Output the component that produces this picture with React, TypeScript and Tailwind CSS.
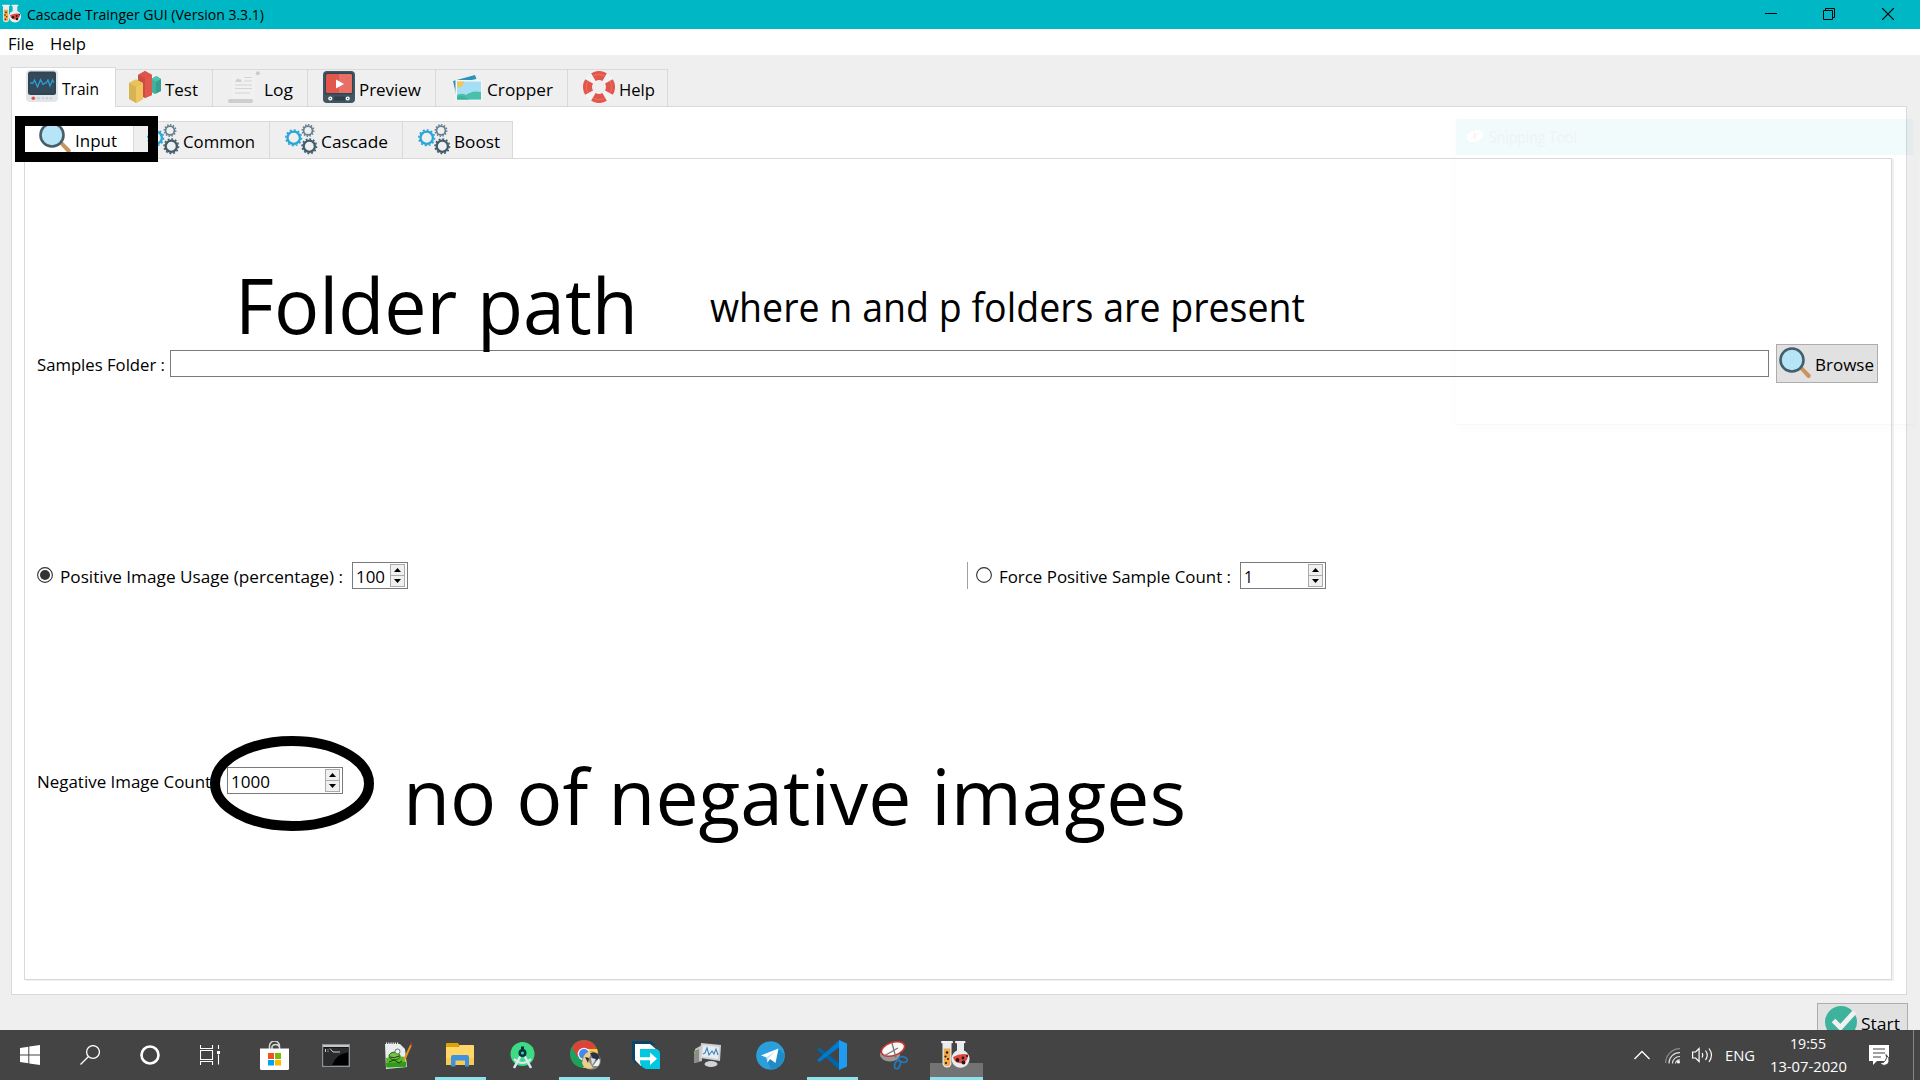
import React, { useLayoutEffect, useRef } from "react";

/** Single line of text condensed or widened to fill the width of its box. */
function Fit({ className, children }: { className: string; children: string }) {
  const box = useRef<HTMLSpanElement>(null);
  const text = useRef<HTMLSpanElement>(null);
  useLayoutEffect(() => {
    if (box.current && text.current) {
      const ratio = box.current.clientWidth / text.current.getBoundingClientRect().width;
      text.current.style.transform = `scaleX(${ratio})`;
    }
  }, []);
  return (
    <span className={`block shrink-0 whitespace-nowrap ${className}`}>
      <span ref={box} className="block w-full">
        <span ref={text} className="inline-block origin-left align-top">
          {children}
        </span>
      </span>
    </span>
  );
}

const Magnifier = ({ className = "" }: { className?: string }) => (
  <svg className={`size-8 shrink-0 ${className}`} viewBox="0 0 32 32">
    <path d="M20.5 22l3-2.5 8 8.3c1 1.500-1 4-3 3z" fill="#c9955c" />
    <circle cx="13" cy="13" r="11.500" fill="#b5e5f6" stroke="#465d6c" strokeWidth="2.600" />
  </svg>
);

const Gear = ({ x, y, r, c, w }: { x: number; y: number; r: number; c: string; w: number }) => (
  <g fill="none" stroke={c}>
    <circle cx={x} cy={y} r={r} strokeWidth={w} />
    <circle cx={x} cy={y} r={r + w / 2 + 0.5} strokeWidth="1.500" pathLength="48" strokeDasharray="2 2" />
  </g>
);

const Gears = () => (
  <svg className="size-8 shrink-0 overflow-visible" viewBox="0 0 32 32">
    <Gear x={8.7} y={14.8} r={6.2} c="#27a7d8" w={2.3} />
    <Gear x={23} y={7.5} r={4.4} c="#667f8f" w={1.7} />
    <Gear x={24.3} y={23.2} r={5.6} c="#415b6b" w={2.3} />
  </svg>
);

const TrainIcon = () => (
  <svg className="size-8 shrink-0" viewBox="0 0 32 32">
    <rect width="32" height="32" rx="4" fill="#e3e6e8" />
    <rect x="2" y="1.500" width="28" height="23.500" rx="2.500" fill="#2f4554" />
    <rect x="4" y="3.500" width="24" height="19.500" fill="#34495a" />
    <path d="M4 13h3l1.500-3 3 7 3-7.500 2.500 5 2-1.500h1l2-3 2 6 2.500-6 1.500 2.500" fill="none" stroke="#2a9fd0" strokeWidth="1.300" />
    <circle cx="7.300" cy="28.300" r="1.800" fill="#e0524a" />
    <g fill="#cbd0d3">
      <circle cx="12.500" cy="28.300" r="1.300" /><circle cx="17" cy="28.300" r="1.300" />
      <circle cx="21" cy="28.300" r="1.300" /><circle cx="25" cy="28.300" r="1.300" />
    </g>
  </svg>
);

const TestIcon = () => (
  <svg className="size-8 shrink-0" viewBox="0 0 32 32">
    <path d="M22 8l5.500-3L32 8v12l-6 3-4-2z" fill="#3db39e" />
    <path d="M27 10l5-2v12l-5 2.500z" fill="#36a08d" />
    <path d="M22 8l5.500-3L32 8l-5 2.500z" fill="#4dc4ae" />
    <path d="M9 4l7-4 7 4v20l-7 3-7-3z" fill="#cb4e45" />
    <path d="M16 7l7-3v20l-7 3z" fill="#e2574c" />
    <path d="M9 4l7-4 7 4-7 3z" fill="#dd5449" />
    <path d="M0 12l7-3.500 7 3.500v16l-7 4-7-4z" fill="#d7b354" />
    <path d="M7 15.500l7-3.500v16l-7 4z" fill="#efc75e" />
    <path d="M0 12l7-3.500 7 3.500-7 3.500z" fill="#ebc35c" />
  </svg>
);

const LogIcon = () => (
  <svg className="size-8 shrink-0" viewBox="0 0 32 32">
    <path d="M4 3h23v25H4z" fill="#f1f1f1" />
    <circle cx="29.800" cy="2.200" r="2" fill="#c8cccf" />
    <path d="M7 11l2.500-4 1.500 2 1-1.500L14 11z" fill="#cdd1d4" />
    <path d="M16 6.500h8M16 10h8M7 14h17M7 17.500h17M7 22h15" stroke="#d3d6d9" strokeWidth="1.100" />
    <rect x="0" y="28" width="25" height="4" rx="1.800" fill="#cbcfd1" />
  </svg>
);

const PreviewIcon = () => (
  <svg className="size-8 shrink-0" viewBox="0 0 32 32">
    <rect width="32" height="32" rx="4" fill="#415563" />
    <rect x="2" y="1.500" width="28" height="22" rx="2" fill="#324450" />
    <rect x="3" y="3" width="26" height="19" rx="1.500" fill="#e2574c" />
    <path d="M16 3h11.500q1.500 0 1.500 1.500v16q0 1.500-1.500 1.500H16z" fill="#e86f65" />
    <path d="M13 8.500l8 4.500-8 4.500z" fill="#fff" />
    <rect x="11" y="25.500" width="11" height="4" rx="1" fill="#2f3f4b" />
    <g fill="none" stroke="#fff" strokeWidth="1.400">
      <circle cx="7.300" cy="27.500" r="1.400" /><circle cx="24.700" cy="27.500" r="1.400" />
    </g>
  </svg>
);

const CropperIcon = () => (
  <svg className="size-8 shrink-0" viewBox="0 0 32 32">
    <path d="M1.500 10L24 4l2 5-18 4 1 13-4-1z" fill="#f5f5f5" />
    <path d="M2 10l22-6 1.500 4L6 12l1 11-2 .5z" fill="#2d91b8" />
    <rect x="4.500" y="9" width="27" height="20.500" fill="#f5f5f5" />
    <rect x="6" y="10.500" width="24" height="18" fill="#a4dff5" />
    <path d="M6 10.500h7q0 6-7 6z" fill="#efc75e" />
    <path d="M6 24q5-2.500 9 0 6-5 15-3v7.500H6z" fill="#4bbfa9" />
    <path d="M6 26q6-3 12 2.500H6z" fill="#3db39e" />
  </svg>
);

const HelpIcon = () => (
  <svg className="size-8 shrink-0" viewBox="0 0 32 32">
    <circle cx="16" cy="16" r="11.500" fill="none" stroke="#f3f3f3" strokeWidth="9" />
    <circle cx="16" cy="16" r="11.400" fill="none" stroke="#e2574c" strokeWidth="9" pathLength="80" strokeDasharray="13 7" strokeDashoffset="-3.500" transform="rotate(-45 16 16)" />
    <circle cx="16" cy="16" r="12.500" fill="none" stroke="#e97066" strokeWidth="1" pathLength="80" strokeDasharray="13 7" strokeDashoffset="-3.500" transform="rotate(-45 16 16)" />
  </svg>
);

const Flasks = ({ className }: { className: string }) => (
  <svg className={className} viewBox="0 0 30 28">
    <path d="M1.500 1v21a4.500 4.500 0 009 0V1z" fill="#e9ecee" />
    <rect x="0" y="0" width="12" height="2.200" rx="1" fill="#eef0f1" />
    <path d="M2.700 7.500h6.600V22a3.300 3.300 0 01-6.600 0z" fill="#efaa4a" />
    <path d="M16 1h7v8.500a9 9 0 11-7 0z" fill="#e9ecee" />
    <rect x="14" y="0" width="10.500" height="2.200" rx="1" fill="#eef0f1" />
    <path d="M12 16q7-4 15-2.500A7.500 7.500 0 1112 16z" fill="#db4a41" />
    <g fill="#2a1510">
      <circle cx="6" cy="11.500" r="1.200" /><circle cx="4.500" cy="15.500" r="1.100" /><circle cx="7" cy="18" r="1" /><circle cx="5" cy="22" r="1.100" />
      <circle cx="16.500" cy="19" r="1.900" /><circle cx="22" cy="17" r="1.400" /><circle cx="22.500" cy="21.500" r="1.900" /><circle cx="26" cy="15" r="1" />
    </g>
  </svg>
);

type TabProps = { icon: React.ReactNode; label: string; className: string; text: string };

const Tab = ({ icon, label, className, text }: TabProps) => (
  <div className={`flex h-[37px] shrink-0 items-start border-t border-r border-[#d9d9d9] bg-[#efefef] pt-px ${className}`}>
    {icon}
    <Fit className={`mt-[9px] ${text}`}>{label}</Fit>
  </div>
);

const Spin = ({ value, className, text }: { value: string; className: string; text: string }) => (
  <div className={`flex h-[27px] shrink-0 justify-between border border-[#7a7a7a] bg-white p-px pl-[3px] ${className}`}>
    <Fit className={`mt-[3px] ${text}`}>{value}</Fit>
    <div className="mr-px flex h-[23px] w-[15px] flex-col border border-[#ababab] bg-[#f0f0f0]">
      <div className="flex flex-1 items-center justify-center border-b border-[#ababab]">
        <svg className="h-1 w-[7px]" viewBox="0 0 7 4"><path d="M0 4l3.500-4L7 4z" /></svg>
      </div>
      <div className="flex flex-1 items-center justify-center">
        <svg className="h-1 w-[7px]" viewBox="0 0 7 4"><path d="M0 0l3.500 4L7 0z" /></svg>
      </div>
    </div>
  </div>
);

const Radio = ({ on }: { on?: boolean }) => (
  <svg className="mt-[5px] size-4 shrink-0" viewBox="0 0 16 16">
    <circle cx="8" cy="8" r="7.400" fill="#fff" stroke="#333" strokeWidth="1.100" />
    {on && <circle cx="8" cy="8" r="5" fill="#333" />}
  </svg>
);

const Task = ({ children, active, open }: { children: React.ReactNode; active?: boolean; open?: boolean }) => (
  <div className="relative flex h-[50px] w-[62px] shrink-0 items-center justify-center">
    {active && <div className="absolute bottom-[3px] left-[6px] h-[14px] w-[53px] bg-[#737373]" />}
    {open && <div className="absolute bottom-0 left-[7px] h-[3px] w-[51px] bg-[#8ce3ee]" />}
    {active && <div className="absolute bottom-0 left-[6px] h-[3px] w-[53px] bg-[#8ce3ee]" />}
    <div className="relative ml-[2px]">{children}</div>
  </div>
);

const Taskbar = () => (
  <div className="relative flex h-[50px] w-full shrink-0 bg-[#444444] text-white">
    <div className="flex w-[242px] shrink-0 items-center pl-5">
      <svg className="h-5 w-5" viewBox="0 0 20 20" fill="#fff"><path d="M0 3l8.300-1.200V9.500H0zM9.300 1.600L20 0v9.500H9.300zM0 10.500h8.300v7.700L0 17zM9.300 10.500H20V20L9.300 18.400z" /></svg>
      <svg className="ml-10 h-5 w-5" viewBox="0 0 20 20" fill="none" stroke="#fff" strokeWidth="1.300"><circle cx="13" cy="7" r="6.400" /><path d="M8.500 11.500L.5 19.500" /></svg>
      <svg className="ml-10 h-5 w-5" viewBox="0 0 20 20" fill="none" stroke="#fff" strokeWidth="2.600"><circle cx="10" cy="10" r="8.500" /></svg>
      <svg className="ml-10 h-5 w-5" viewBox="0 0 20 20" fill="none" stroke="#fff" strokeWidth="1.100"><path d="M.5 0v3.500h12V0M.5 20v-3.500h12V20M.5 5.500h12v9H.5zM18.500 0v4M18.500 9.500v10" /><path d="M17 6h3v3h-3z" fill="#fff" stroke="none" /></svg>
    </div>
    <Task>
      <svg className="h-[29px] w-[29px]" viewBox="0 0 29 29">
        <path d="M9.500 9V5a5 5 0 0110 0v4M12 9V5.500a4 4 0 017 0" fill="none" stroke="#d8d8d8" strokeWidth="1.500" />
        <path d="M0 7.500h29V27.500q0 1.500-1.500 1.500h-26Q0 29 0 27.500z" fill="#fff" />
        <path d="M8 12h6v6H8z" fill="#f25022" /><path d="M15 12h6v6h-6z" fill="#7fba00" /><path d="M8 19h6v5.500H8z" fill="#00a4ef" /><path d="M15 19h6v5.500h-6z" fill="#ffb900" />
      </svg>
    </Task>
    <Task>
      <svg className="h-[23px] w-7" viewBox="0 0 28 23">
        <rect x=".7" y=".7" width="26.600" height="21.600" fill="#000" stroke="#8b9299" strokeWidth="1.400" />
        <path d="M1 1h26v2H1z" fill="#c2c7cc" /><path d="M2 3.500h24v5q-12 1-16 13H2z" fill="#2b2b2b" />
        <path d="M3.500 5v3M6 5.500v.8M6 7.300v.8M8 4.500l3 3.500M11 8h7" stroke="#ccc" strokeWidth="1" fill="none" />
      </svg>
    </Task>
    <Task>
      <svg className="h-[27px] w-7" viewBox="0 0 28 27">
        <path d="M1 2h15l5 5 2 18-21 2z" fill="#e8eeee" /><path d="M2 16q9-3 19-1l1 10L2.500 25.500z" fill="#56b82a" />
        <path d="M2 21l20-1 .3 4.500L2.500 25.500z" fill="#2f9a1c" /><path d="M2 1.500h13" stroke="#eee" strokeWidth="2" strokeDasharray="1.200 1" />
        <ellipse cx="10.500" cy="14" rx="5.500" ry="3.800" fill="#71c837" stroke="#274d16" /><circle cx="13.500" cy="9.500" r="2.500" fill="#e8f5df" stroke="#456" strokeWidth=".8" />
        <path d="M6 15q4 2 9-1M5 20l5-2 5 3 3-2" stroke="#1e3d12" fill="none" />
        <path d="M19 20l1-4.500L26.500 2l1.500 1-6 13.500z" fill="#e8951e" /><path d="M26 3l1-3 1.500.8-.7 3z" fill="#9c3c2c" />
      </svg>
    </Task>
    <Task open>
      <svg className="h-6 w-7" viewBox="0 0 28 24">
        <path d="M0 1q0-1 1-1h11l2 3h-2v3H0z" fill="#e0a008" /><path d="M0 4h12l2-2h13q1 0 1 1v19H0z" fill="#ffd768" /><path d="M0 15h28v7H0z" fill="#fbc94d" />
        <path d="M5 23.500V14q0-2 2-2h14q2 0 2 2v9.500h-4V17.500H9.500v6z" fill="#3d93df" />
      </svg>
    </Task>
    <Task>
      <svg className="h-[27px] w-[25px]" viewBox="0 0 25 27">
        <circle cx="12.500" cy="12" r="12" fill="#3ddc84" />
        <path d="M10.500 14L4 26M14.500 14L21 26" stroke="#d9e8f3" strokeWidth="2.600" /><path d="M4 17q8.500 8 17 0" fill="none" stroke="#d9e8f3" strokeWidth="2" />
        <rect x="11" y="4.500" width="3" height="4" fill="#073042" /><circle cx="12.500" cy="11" r="4" fill="#073042" /><circle cx="12.500" cy="11" r="1.500" fill="#3ddc84" />
      </svg>
    </Task>
    <Task open>
      <svg className="ml-[2px] h-[30px] w-[31px]" viewBox="0 0 31 30">
        <circle cx="14" cy="14" r="14" fill="#1fa05c" /><path d="M2 7a14 14 0 0125 2H14l-6.500 8z" fill="#db4437" /><path d="M28 14a14 14 0 01-15 14l6.500-11L14 9h13q1 2 1 5z" fill="#ffcd40" />
        <circle cx="14" cy="14" r="6.300" fill="#f2f2f2" /><circle cx="14" cy="14" r="5" fill="#4587f3" />
        <circle cx="21.500" cy="20.500" r="9.300" fill="#8c8a80" /><path d="M14 16q3-5 8-4l-4 8 5 8q-8 3-11-5z" fill="#e9cf92" /><path d="M20 13q9-2 10 6l-6 2z" fill="#2a3140" /><path d="M23 26l6-8q2 4-1 8z" fill="#eef2f5" /><path d="M15 17l4 1-1 5z" fill="#2f2a20" /><path d="M21 18l5 1-4 6z" fill="#d6e2ef" />
      </svg>
    </Task>
    <Task>
      <svg className="h-7 w-7" viewBox="0 0 28 28">
        <path d="M0 0h19l5 4H4v20l-4-6z" fill="#0a4468" /><path d="M3 3h15l7 6H9v16l-6-6z" fill="#fff" /><path d="M8 8h15q5 0 5 5v15H14q-6-2-6-7z" fill="#00c8e0" />
        <path d="M8 16.200h10v-4.700l7 6.200-7 6.300v-4.700H8z" fill="#fff" />
      </svg>
    </Task>
    <Task>
      <svg className="mr-[2px] h-6 w-[27px]" viewBox="0 0 27 24">
        <path d="M1 6l7-4v16l-8 2z" fill="#c4c4c4" /><path d="M0 8l5-2v13l-5 1z" fill="#8d8d8d" /><path d="M0 9h2v2H0z" fill="#70c030" />
        <path d="M7 0l20 2-1 16L6 15z" fill="#d0d0d0" /><path d="M9 2l16 2-1 12L8 13.500z" fill="#e6edf2" />
        <path d="M9 11l2-1 2-5 2 7 3-4 2 3 2-5 2 6" fill="none" stroke="#3f84bd" strokeWidth="1.100" /><ellipse cx="17" cy="21" rx="6.500" ry="3" fill="#d4d4d4" />
      </svg>
    </Task>
    <Task>
      <svg className="h-[29px] w-[29px]" viewBox="0 0 29 29">
        <circle cx="14.500" cy="14.500" r="14.300" fill="#2a9fdc" /><path d="M22.500 7.500L28 13a14.300 14.300 0 01-13 15.500L12 21z" fill="#1f8cc8" />
        <path d="M5 14.500L22.500 7.500 19.500 22l-5.500-4-2.500 3.500-1-5z" fill="#fff" /><path d="M10.500 16.500l9-6.500-7.500 7.500-.5 4z" fill="#c5dcec" />
      </svg>
    </Task>
    <Task open>
      <svg className="h-[30px] w-[30px]" viewBox="0 0 30 30">
        <path d="M0 9.500l2.500-2 20 16V30z" fill="#0065a9" /><path d="M0 20l2.500 2L22.500 7V0z" fill="#007acc" /><path d="M22 0l8 3.500v23L22 30z" fill="#1f9cf0" />
      </svg>
    </Task>
    <Task>
      <svg className="h-[29px] w-7" viewBox="0 0 28 29">
        <ellipse cx="10" cy="14" rx="10" ry="6.500" fill="#999" />
        <ellipse cx="13" cy="8" rx="12" ry="6.500" fill="#fafafa" stroke="#cf3530" strokeWidth="1.600" transform="rotate(-18 13 8)" />
        <path d="M12 2l4 15M4 15l14-8" stroke="#777" strokeWidth="1.300" />
        <g fill="none" stroke="#2477b9" strokeWidth="1.800"><ellipse cx="23" cy="18.500" rx="4.300" ry="2.600" transform="rotate(15 23 18.500)" /><ellipse cx="17.500" cy="23.500" rx="2.600" ry="4.300" transform="rotate(20 17.500 23.500)" /></g>
      </svg>
    </Task>
    <Task active><Flasks className="h-7 w-[30px]" /></Task>
    <div className="flex flex-1 items-start font-['Open_Sans',sans-serif]">
      <svg className="mt-5 ml-[648px] h-[10px] w-4 shrink-0" viewBox="0 0 16 10" fill="none" stroke="#fff" strokeWidth="1.300"><path d="M.5 9L8 1.500 15.500 9" /></svg>
      <svg className="mt-[18px] ml-[15px] h-4 w-[15px] shrink-0" viewBox="0 0 15 16" fill="none" strokeWidth="1.200">
        <path d="M.6 15A14.500 14.500 0 0115 .7" stroke="#8c8c8c" /><path d="M4 15.500A10.500 10.500 0 0115 4.700M7.500 15.500A7 7 0 0115 8.500" stroke="#ddd" /><path d="M10.500 15.500A4 4 0 0115 12" stroke="#ddd" /><circle cx="13.500" cy="14" r="1.500" fill="#fff" />
      </svg>
      <svg className="mt-[17px] ml-[12px] h-4 w-[21px] shrink-0" viewBox="0 0 21 16" fill="none" stroke="#fff" strokeWidth="1.200"><path d="M.6 5h3l3.500-3.500v13L3.600 11h-3zM10 6q1.500 2 0 4.500M13.500 3.500q3.500 4.500 0 9.500M17 1.500q5 6.500 0 13.500" /></svg>
      <Fit className="mt-[15px] ml-[12px] w-[30px] text-[15px] leading-5">ENG</Fit>
      <div className="ml-[15px] w-[77px]">
        <Fit className="mt-[3px] ml-[20px] w-[36px] text-[15px] leading-5">19:55</Fit>
        <Fit className="mt-[3px] w-[77px] text-[15px] leading-5">13-07-2020</Fit>
      </div>
      <svg className="mt-[15px] ml-[22px] h-[21px] w-5 shrink-0" viewBox="0 0 20 21">
        <path d="M0 0h20v16H8l-4 4v-4H0z" fill="#fff" /><path d="M4 4h12M4 8h12M4 12h8" stroke="#444" strokeWidth="1.200" />
        <path d="M17 9.500a6 6 0 01-6 8.500 5 5 0 009-1q1-4-3-7.500z" fill="#fff" stroke="#444" strokeWidth="1" />
      </svg>
      <div className="ml-[24px] h-[50px] w-px bg-[#858585]" />
    </div>
  </div>
);

export default function App() {
  return (
    <div className="relative flex h-[1080px] w-[1920px] flex-col overflow-hidden bg-[#efefef] font-['Open_Sans',sans-serif] text-[15.5px] leading-5 text-black">
      <div className="flex h-[29px] shrink-0 items-start bg-[#00b7c5]">
        <Flasks className="mt-1 ml-[2px] h-[20px] w-5" />
        <Fit className="mt-[5px] ml-[5px] w-[237px] text-[14px] leading-5">Cascade Trainger GUI (Version 3.3.1)</Fit>
        <svg className="mt-[13px] ml-auto h-px w-3" viewBox="0 0 12 1"><path d="M0 0h12v1H0z" /></svg>
        <svg className="mt-2 ml-[46px] h-3 w-3" viewBox="0 0 12 12" fill="none" stroke="#000"><path d="M.5 2.500h9v9h-9zM2.500 2.500v-2h9v9h-2" /></svg>
        <svg className="mt-2 mr-[26px] ml-[47px] h-3 w-3" viewBox="0 0 12 12" fill="none" stroke="#000" strokeWidth="1.200"><path d="M0 0l12 12M12 0L0 12" /></svg>
      </div>
      <div className="flex h-[26px] shrink-0 bg-white pt-[5px] pl-2">
        <Fit className="w-[26px]">File</Fit>
        <Fit className="ml-[16px] w-[36px]">Help</Fit>
      </div>

      <div className="mt-3 ml-[11px] flex h-[39px] shrink-0 items-end">
        <div className="relative z-10 -mb-px flex h-10 w-[105px] items-start border border-b-0 border-[#d9d9d9] bg-white pt-[2px] pl-[14px]">
          <TrainIcon />
          <Fit className="mt-[9px] ml-[4px] w-[37px]">Train</Fit>
        </div>
        <Tab icon={<TestIcon />} label="Test" className="w-[97px] pl-[13px]" text="ml-[4px] w-[33px]" />
        <Tab icon={<LogIcon />} label="Log" className="w-[95px] pl-[15px]" text="ml-[4px] w-[29px]" />
        <Tab icon={<PreviewIcon />} label="Preview" className="w-[128px] pl-[15px]" text="ml-[4px] w-[62px]" />
        <Tab icon={<CropperIcon />} label="Cropper" className="w-[132px] pl-[15px]" text="ml-[4px] w-[66px]" />
        <Tab icon={<HelpIcon />} label="Help" className="w-[100px] pl-[15px]" text="ml-[4px] w-[36px]" />
      </div>

      <div className="ml-[11px] h-[889px] w-[1896px] shrink-0 border border-[#d9d9d9] bg-white pt-[12px] pl-[12px]">
        <div className="flex h-[39px] items-end">
          <div className="relative z-10 -mb-px flex h-10 w-[110px] items-start border border-b-0 border-[#d9d9d9] bg-white pt-[2px] pl-[14px]">
            <Magnifier />
            <Fit className="mt-[9px] ml-[4px] w-[42px]">Input</Fit>
          </div>
          <Tab icon={<Gears />} label="Common" className="w-[136px] pl-[13px]" text="ml-[4px] w-[72px]" />
          <Tab icon={<Gears />} label="Cascade" className="w-[133px] pl-[15px]" text="ml-[4px] w-[67px]" />
          <Tab icon={<Gears />} label="Boost" className="w-[110px] pl-[15px]" text="ml-[4px] w-[46px]" />
        </div>
        <div className="h-[822px] w-[1868px] border border-[#d9d9d9] bg-white shadow-[2px_1px_0_#f0f0f0]">
          <div className="mt-[185px] flex h-[39px] items-start pl-3">
            <Fit className="mt-[11px] w-[128px]">Samples Folder :</Fit>
            <div className="mt-[6px] ml-[5px] h-[27px] w-[1599px] border border-[#7a7a7a] bg-white" />
            <div className="ml-[7px] flex h-[39px] w-[102px] items-start border border-[#adadad] bg-[#e1e1e1] pt-[2px] pl-[2px]">
              <Magnifier />
              <Fit className="mt-2 ml-[4px] w-[59px]">Browse</Fit>
            </div>
          </div>
          <div className="mt-[179px] flex h-[27px] items-start pl-3">
            <Radio on />
            <Fit className="mt-[5px] ml-[7px] w-[283px]">Positive Image Usage (percentage) :</Fit>
            <Spin value="100" className="ml-[9px] w-[56px]" text="w-[29px]" />
            <div className="ml-[559px] h-[27px] w-px bg-[#a0a0a0]" />
            <div className="ml-2 flex">
              <Radio />
              <Fit className="mt-[5px] ml-[7px] w-[232px]">Force Positive Sample Count :</Fit>
              <Spin value="1" className="ml-[9px] w-[86px]" text="w-[9px]" />
            </div>
          </div>
          <div className="mt-[178px] flex h-[27px] items-start pl-3">
            <Fit className="mt-[5px] w-[183px]">Negative Image Count :</Fit>
            <Spin value="1000" className="ml-[7px] w-[116px]" text="w-[39px]" />
          </div>
        </div>
      </div>

      <div className="mt-2 flex h-[27px] shrink-0 justify-end overflow-hidden pr-3">
        <div className="flex h-[39px] w-[91px] items-start border border-[#adadad] bg-[#e1e1e1] pt-[2px] pl-[7px]">
          <svg className="size-8 shrink-0" viewBox="0 0 32 32">
            <circle cx="16" cy="16" r="16" fill="#3db39e" /><path d="M8.500 14.500l7 7L29.500 6" fill="none" stroke="#f2f1ef" strokeWidth="5" />
          </svg>
          <Fit className="mt-2 ml-[4px] w-[39px]">Start</Fit>
        </div>
      </div>
      <Taskbar />

      {/* Window that is fading out */}
      <div className="absolute top-[119px] left-[1456px] z-20 h-[306px] w-[457px] border-b border-[#00b7c5]/5 shadow-[0_2px_10px_rgba(0,0,0,0.025)]">
        <div className="flex h-9 items-center bg-[#00b7c5]/5 pl-[10px] text-[#eef3f4]">
          <svg className="h-4 w-[18px]" viewBox="0 0 18 16"><ellipse cx="9" cy="7" rx="8.500" ry="5.500" fill="#fff" transform="rotate(-18 9 7)" /><path d="M5 10l8-6M8 3l2 8" stroke="#f6f0f0" /></svg>
          <Fit className="ml-[5px] w-[88px]">Snipping Tool</Fit>
        </div>
      </div>

      {/* Annotations drawn over the window */}
      <div className="absolute top-[116px] left-[15px] z-20 h-[46px] w-[143px] border-[10px] border-black" />
      <svg className="absolute top-[736px] left-[210px] z-20 h-[95px] w-[164px]" viewBox="0 0 164 95">
        <ellipse cx="82" cy="47.500" rx="77" ry="42.500" fill="none" stroke="#000" strokeWidth="10" />
      </svg>
      <div className="absolute top-[254px] left-[235px] z-20 text-[77.500px] leading-[100px]"><Fit className="w-[403px]">Folder path</Fit></div>
      <div className="absolute top-[281px] left-[710px] z-20 text-[39.500px] leading-[52px]"><Fit className="w-[595px]">where n and p folders are present</Fit></div>
      <div className="absolute top-[745px] left-[403px] z-20 text-[77.500px] leading-[100px]"><Fit className="w-[783px]">no of negative images</Fit></div>
    </div>
  );
}
